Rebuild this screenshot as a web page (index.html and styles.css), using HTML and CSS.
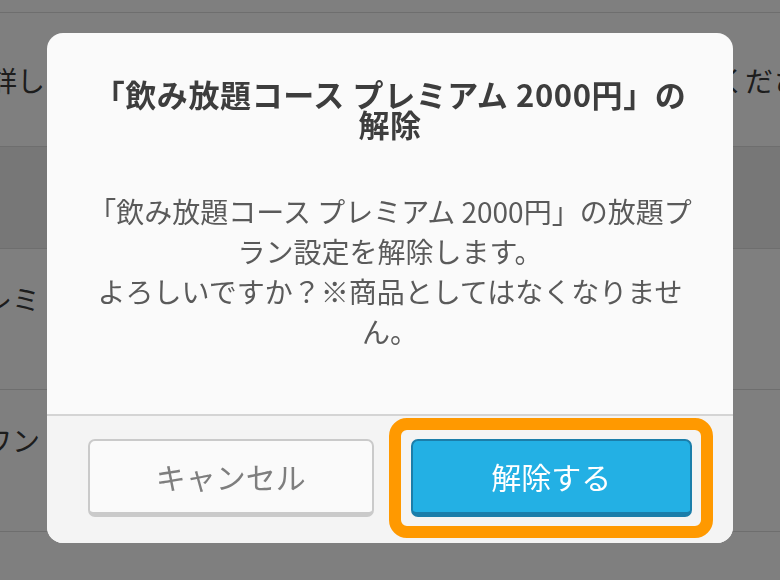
FILE: index.html
```html
<!DOCTYPE html>
<html lang="ja">
<head>
<meta charset="utf-8">
<title>飲み放題プランの解除</title>
<link rel="stylesheet" href="styles.css">
</head>
<body>
  <div class="page">
    <div class="row row-top"></div>
    <div class="row row-info">
      <p class="row-text info-text">詳しい設定は「飲み放題プラン」の設定画面からもご確認ください。</p>
    </div>
    <div class="row row-section"></div>
    <div class="row row-item">
      <p class="row-text item-premium">プレミ・アムコース</p>
    </div>
    <div class="row row-item">
      <p class="row-text item-one">ワン・ドリンクコース</p>
    </div>
    <div class="row row-rest"></div>
  </div>

  <div class="overlay">
    <div class="dialog" role="dialog" aria-labelledby="dialog-title">
      <div class="dialog-body">
        <h2 class="dialog-title" id="dialog-title">「飲み放題コース プレミアム 2000円」の<span class="nowrap">解除</span></h2>
        <p class="dialog-message">「飲み放題コース プレミアム 2000円」の放題プラン設定を解除します。<br>よろしいですか？※商品としてはなくなりません。</p>
      </div>
      <div class="dialog-footer">
        <button class="btn btn-cancel" type="button">キャンセル</button>
        <div class="focus-wrap">
          <button class="btn btn-primary" type="button">解除する</button>
          <span class="focus-ring" aria-hidden="true"></span>
        </div>
      </div>
    </div>
  </div>
</body>
</html>
```

FILE: styles.css
```css
html, body {
  margin: 0;
  padding: 0;
}

body {
  width: 780px;
  height: 580px;
  overflow: hidden;
  background: #ffffff;
  font-family: "Noto Sans CJK JP", "Noto Sans", sans-serif;
  color: #444444;
}

/* list page behind the dialog */
.page {
  display: flex;
  flex-direction: column;
  height: 580px;
  overflow: hidden;
}

.row {
  border-bottom: 1px solid #dcdcdc;
  overflow: hidden;
  flex: none;
}

.row-top {
  height: 12px;
}

.row-info {
  height: 133px;
  display: flex;
  align-items: center;
}

.row-section {
  height: 101px;
  background: #eeeeee;
}

.row-item {
  height: 141px;
  padding-top: 30px;
  box-sizing: border-box;
}

.row-item + .row-item {
  height: 142px;
}

.row-rest {
  flex: 1;
  border-bottom: none;
}

.row-text {
  margin: 0;
  font-size: 28px;
  line-height: 40px;
  white-space: nowrap;
  color: #3a3a3a;
}

.info-text {
  margin-left: -11px;
}

.item-premium {
  margin-left: -44px;
}

.item-one {
  margin-left: -16px;
}

/* modal */
.overlay {
  position: fixed;
  inset: 0;
  background: rgba(0, 0, 0, 0.5);
  display: flex;
  justify-content: center;
  align-items: flex-start;
  padding-top: 33px;
}

.dialog {
  width: 686px;
  background: #fafafa;
  border-radius: 16px;
  overflow: hidden;
}

.dialog-body {
  padding: 46px 38px 63px;
  text-align: center;
}

.dialog-title {
  margin: 0;
  font-size: 31px;
  line-height: 30px;
  letter-spacing: 0.6px;
  font-weight: bold;
  color: #3d3d3d;
}

.nowrap {
  white-space: nowrap;
}

.dialog-message {
  margin: 52px 0 0;
  font-size: 28px;
  line-height: 40px;
  color: #5a5a5a;
}

.dialog-footer {
  display: flex;
  gap: 37px;
  padding: 23px 41px 26px;
  border-top: 2px solid #d4d4d4;
  background: #f4f4f4;
}

.btn {
  flex: 1 1 0;
  min-width: 0;
  height: 78px;
  box-sizing: border-box;
  border: 2px solid;
  border-bottom-width: 5px;
  border-radius: 7px;
  font-family: "Noto Sans CJK JP", sans-serif;
  font-size: 30px;
  padding: 0 0 2px;
  cursor: pointer;
}

.btn-cancel {
  background: #fafafa;
  border-color: #cacaca;
  color: #7e7e7e;
}

.focus-wrap {
  position: relative;
  flex: 1 1 0;
  min-width: 0;
  display: flex;
}

.btn-primary {
  background: #23b0e4;
  border-color: #1b7eaa;
  color: #ffffff;
}

/* keyboard focus highlight around the confirm button */
.focus-ring {
  position: absolute;
  top: -21px;
  right: -21px;
  bottom: -21px;
  left: -22px;
  border: 12px solid #ff9900;
  border-radius: 18px;
  pointer-events: none;
}
```
